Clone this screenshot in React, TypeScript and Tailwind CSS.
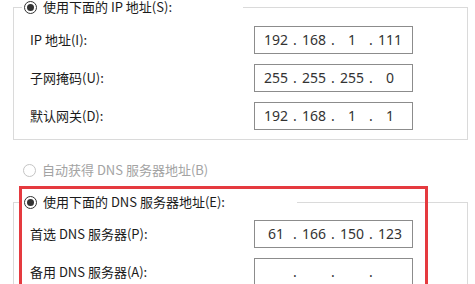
import React from 'react'

// ── Radio ──────────────────────────────────────────────────────────────────

function Radio({ checked, disabled }: { checked?: boolean; disabled?: boolean }) {
  return (
    <span
      className={
        disabled
          ? 'flex h-[13px] w-[13px] shrink-0 items-center justify-center rounded-full border border-[#c4c4c4] bg-white'
          : 'flex h-[13px] w-[13px] shrink-0 items-center justify-center rounded-full border border-[#333333] bg-white'
      }
    >
      {checked && <span className="h-[7px] w-[7px] rounded-full bg-[#333333]" />}
    </span>
  )
}

// ── IP address box ─────────────────────────────────────────────────────────

function IpBox({ parts }: { parts: string[] }) {
  return (
    <div className="flex h-[28px] w-[159px] shrink-0 items-center border border-[#8c8c8c] bg-white pl-[5px] font-['Noto_Sans',sans-serif] text-[14px] leading-none text-[#333333]">
      {parts.map((p, i) => (
        <React.Fragment key={i}>
          <span className="w-[32px] text-center">{p}</span>
          {i < 3 && <span className="w-[6px] text-center">.</span>}
        </React.Fragment>
      ))}
    </div>
  )
}

function Row({ label, parts }: { label: string; parts: string[] }) {
  return (
    <div className="flex h-[28px] items-center">
      <div className="w-[224px] shrink-0">{label}</div>
      <IpBox parts={parts} />
    </div>
  )
}

// ── Page ───────────────────────────────────────────────────────────────────

export default function App() {
  return (
    <div className="relative h-[284px] w-[475px] overflow-hidden bg-white font-['Noto_Sans_CJK_SC',sans-serif] text-[13px] text-[#1b1b1b]">
      <div className="-mt-[2px] flex flex-col">
        {/* IP group */}
        <fieldset className="ml-[13px] w-[455px] border border-[#dadada] pb-[9px]">
          <legend className="ml-[8px] w-[221px] px-[2px]">
            <div className="flex h-[18px] items-center gap-[6px]">
              <Radio checked />
              <span>使用下面的 IP 地址(S):</span>
            </div>
          </legend>
          <div className="flex flex-col gap-[10px] pl-[16px] pt-[10px]">
            <Row label="IP 地址(I):" parts={['192', '168', '1', '111']} />
            <Row label="子网掩码(U):" parts={['255', '255', '255', '0']} />
            <Row label="默认网关(D):" parts={['192', '168', '1', '1']} />
          </div>
        </fieldset>

        {/* auto DNS (disabled) */}
        <div className="mt-[21px] flex h-[18px] items-center gap-[6px] pl-[23px] text-[#a3a3a3]">
          <Radio disabled />
          <span>自动获得 DNS 服务器地址(B)</span>
        </div>

        {/* DNS group */}
        <fieldset className="ml-[13px] mt-[14px] w-[455px] border border-[#dadada] pb-[9px]">
          <legend className="ml-[8px] w-[275px] px-[2px]">
            <div className="flex h-[18px] items-center gap-[6px]">
              <Radio checked />
              <span>使用下面的 DNS 服务器地址(E):</span>
            </div>
          </legend>
          <div className="flex flex-col gap-[10px] pl-[16px] pt-[9px]">
            <Row label="首选 DNS 服务器(P):" parts={['61', '166', '150', '123']} />
            <Row label="备用 DNS 服务器(A):" parts={['', '', '', '']} />
          </div>
        </fieldset>
      </div>

      {/* red highlight */}
      <div className="pointer-events-none absolute left-[19px] top-[186px] h-[130px] w-[409px] border-[3px] border-[#e53a3f]" />
    </div>
  )
}
